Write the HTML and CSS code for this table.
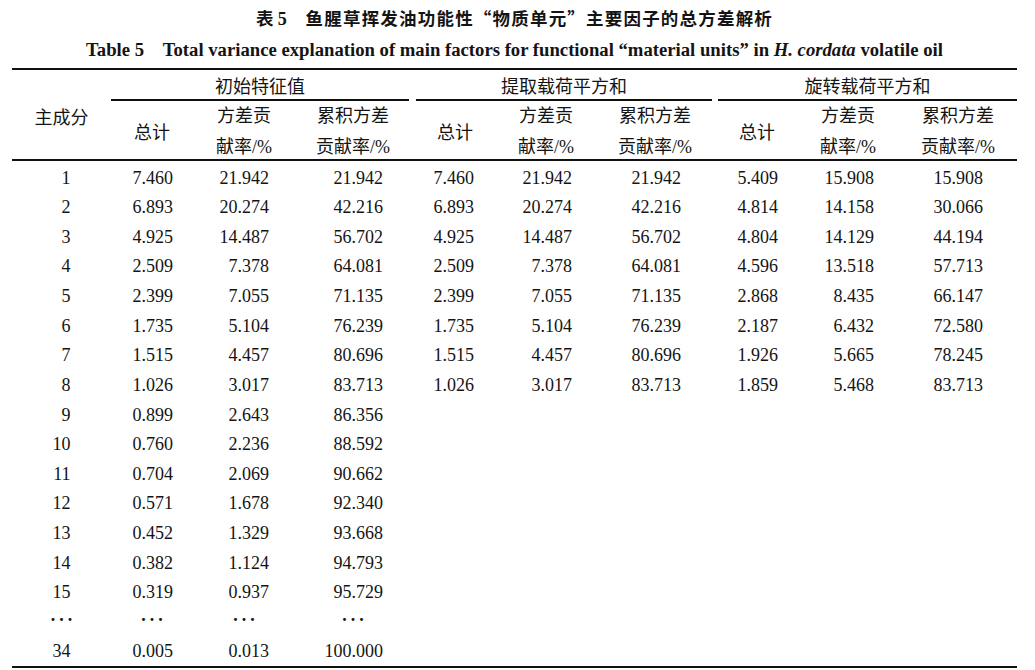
FILE: index.html
```html
<!DOCTYPE html>
<html lang="zh-CN">
<head>
<meta charset="utf-8">
<title>表 5 鱼腥草挥发油功能性“物质单元”主要因子的总方差解析</title>
<link rel="stylesheet" href="styles.css">
</head>
<body>
<div class="page">
  <div class="caption-cn"><span class="cn-bold">表</span> <span class="num-bold">5</span><span class="cn-bold cn-title">　鱼腥草挥发油功能性“物质单元”主要因子的总方差解析</span></div>
  <div class="caption-en">Table 5&nbsp;&nbsp;&nbsp;&nbsp;Total variance explanation of main factors for functional “material units” in <i>H. cordata</i> volatile oil</div>
  <table class="data">
    <colgroup>
      <col class="w0"><col class="w1"><col class="w2"><col class="w3"><col class="w4"><col class="w5"><col class="w6"><col class="w7"><col class="w8"><col class="w9">
    </colgroup>
    <thead>
      <tr>
        <th rowspan="2" class="rule-b comp">主成分</th>
        <th colspan="3" class="grp"><div class="grp-label g1">初始特征值</div></th>
        <th colspan="3" class="grp"><div class="grp-label g2">提取载荷平方和</div></th>
        <th colspan="3" class="grp"><div class="grp-label g3">旋转载荷平方和</div></th>
      </tr>
      <tr>
        <th class="rule-b"><div class="sub single">总计</div></th>
        <th class="rule-b"><div class="sub">方差贡<br>献率/%</div></th>
        <th class="rule-b"><div class="sub">累积方差<br>贡献率/%</div></th>
        <th class="rule-b"><div class="sub single">总计</div></th>
        <th class="rule-b"><div class="sub">方差贡<br>献率/%</div></th>
        <th class="rule-b"><div class="sub">累积方差<br>贡献率/%</div></th>
        <th class="rule-b"><div class="sub single">总计</div></th>
        <th class="rule-b"><div class="sub">方差贡<br>献率/%</div></th>
        <th class="rule-b"><div class="sub">累积方差<br>贡献率/%</div></th>
      </tr>
    </thead>
    <tbody>
      <tr class="first"><td class="c0">1</td><td class="c1">7.460</td><td class="c2">21.942</td><td class="c3">21.942</td><td class="c4">7.460</td><td class="c5">21.942</td><td class="c6">21.942</td><td class="c7">5.409</td><td class="c8">15.908</td><td class="c9">15.908</td></tr>
      <tr><td class="c0">2</td><td class="c1">6.893</td><td class="c2">20.274</td><td class="c3">42.216</td><td class="c4">6.893</td><td class="c5">20.274</td><td class="c6">42.216</td><td class="c7">4.814</td><td class="c8">14.158</td><td class="c9">30.066</td></tr>
      <tr><td class="c0">3</td><td class="c1">4.925</td><td class="c2">14.487</td><td class="c3">56.702</td><td class="c4">4.925</td><td class="c5">14.487</td><td class="c6">56.702</td><td class="c7">4.804</td><td class="c8">14.129</td><td class="c9">44.194</td></tr>
      <tr><td class="c0">4</td><td class="c1">2.509</td><td class="c2">7.378</td><td class="c3">64.081</td><td class="c4">2.509</td><td class="c5">7.378</td><td class="c6">64.081</td><td class="c7">4.596</td><td class="c8">13.518</td><td class="c9">57.713</td></tr>
      <tr><td class="c0">5</td><td class="c1">2.399</td><td class="c2">7.055</td><td class="c3">71.135</td><td class="c4">2.399</td><td class="c5">7.055</td><td class="c6">71.135</td><td class="c7">2.868</td><td class="c8">8.435</td><td class="c9">66.147</td></tr>
      <tr><td class="c0">6</td><td class="c1">1.735</td><td class="c2">5.104</td><td class="c3">76.239</td><td class="c4">1.735</td><td class="c5">5.104</td><td class="c6">76.239</td><td class="c7">2.187</td><td class="c8">6.432</td><td class="c9">72.580</td></tr>
      <tr><td class="c0">7</td><td class="c1">1.515</td><td class="c2">4.457</td><td class="c3">80.696</td><td class="c4">1.515</td><td class="c5">4.457</td><td class="c6">80.696</td><td class="c7">1.926</td><td class="c8">5.665</td><td class="c9">78.245</td></tr>
      <tr><td class="c0">8</td><td class="c1">1.026</td><td class="c2">3.017</td><td class="c3">83.713</td><td class="c4">1.026</td><td class="c5">3.017</td><td class="c6">83.713</td><td class="c7">1.859</td><td class="c8">5.468</td><td class="c9">83.713</td></tr>
      <tr><td class="c0">9</td><td class="c1">0.899</td><td class="c2">2.643</td><td class="c3">86.356</td><td></td><td></td><td></td><td></td><td></td><td></td></tr>
      <tr><td class="c0">10</td><td class="c1">0.760</td><td class="c2">2.236</td><td class="c3">88.592</td><td></td><td></td><td></td><td></td><td></td><td></td></tr>
      <tr><td class="c0">11</td><td class="c1">0.704</td><td class="c2">2.069</td><td class="c3">90.662</td><td></td><td></td><td></td><td></td><td></td><td></td></tr>
      <tr><td class="c0">12</td><td class="c1">0.571</td><td class="c2">1.678</td><td class="c3">92.340</td><td></td><td></td><td></td><td></td><td></td><td></td></tr>
      <tr><td class="c0">13</td><td class="c1">0.452</td><td class="c2">1.329</td><td class="c3">93.668</td><td></td><td></td><td></td><td></td><td></td><td></td></tr>
      <tr><td class="c0">14</td><td class="c1">0.382</td><td class="c2">1.124</td><td class="c3">94.793</td><td></td><td></td><td></td><td></td><td></td><td></td></tr>
      <tr><td class="c0">15</td><td class="c1">0.319</td><td class="c2">0.937</td><td class="c3">95.729</td><td></td><td></td><td></td><td></td><td></td><td></td></tr>
      <tr><td class="dots"><span class="dot-run">···</span></td><td class="dots"><span class="dot-run">···</span></td><td class="dots"><span class="dot-run">···</span></td><td class="dots"><span class="dot-run">···</span></td><td></td><td></td><td></td><td></td><td></td><td></td></tr>
      <tr class="last"><td class="c0">34</td><td class="c1">0.005</td><td class="c2">0.013</td><td class="c3">100.000</td><td></td><td></td><td></td><td></td><td></td><td></td></tr>
    </tbody>
  </table>
</div>
</body>
</html>
```
FILE: styles.css
```css
html, body {
  margin: 0;
  padding: 0;
  background: #ffffff;
}

body {
  color: #141414;
  font-family: "Liberation Serif", "Noto Sans CJK SC", serif;
}

.page {
  margin-left: 12px;
  width: 1005px;
}

/* ---------- captions ---------- */
.caption-cn {
  padding-top: 2px;
  line-height: 32px;
  height: 32px;
  text-align: center;
  font-size: 17.5px;
  white-space: nowrap;
}

.cn-bold {
  font-family: "Noto Sans CJK SC", sans-serif;
  font-weight: 700;
}

.cn-title {
  letter-spacing: 1.2px;
}

.num-bold {
  font-family: "Liberation Serif", serif;
  font-weight: 700;
  font-size: 18px;
}

.caption-en {
  margin-top: 1px;
  line-height: 30px;
  height: 30px;
  text-align: center;
  font-family: "Liberation Serif", serif;
  font-weight: 700;
  font-size: 18.7px;
  white-space: nowrap;
}

/* ---------- table ---------- */
.data {
  margin-top: 3px;
  width: 1005px;
  table-layout: fixed;
  border-collapse: separate;
  border-spacing: 0;
  border-top: 2px solid #111;
  border-bottom: 2px solid #111;
  font-size: 18px;
}

.w0 { width: 99px; }
.w1 { width: 82px; }
.w2 { width: 102px; }
.w3 { width: 116px; }
.w4 { width: 88px; }
.w5 { width: 94px; }
.w6 { width: 124px; }
.w7 { width: 80px; }
.w8 { width: 102px; }
.w9 { width: 118px; }

th {
  padding: 0;
  font-weight: 400;
  text-align: center;
  vertical-align: top;
  white-space: nowrap;
}

.rule-b {
  border-bottom: 2px solid #111;
}

.comp {
  padding-top: 33px;
  line-height: 31px;
}

.grp-label {
  padding-top: 6px;
  line-height: 23px;
  border-bottom: 2px solid #111;
}

.g1 { margin-right: 2px; }
.g2 { margin: 0 5px; }
.g3 { margin-left: 1px; }

.sub {
  height: 58px;
  line-height: 31px;
}

.sub.single {
  padding-top: 17px;
  height: 41px;
}

td {
  box-sizing: border-box;
  height: 29.64px;
  padding: 0;
  line-height: 20px;
  text-align: right;
  vertical-align: middle;
  white-space: nowrap;
}

tr.first td {
  height: 31.34px;
  padding-top: 1.7px;
}

tr.last td {
  height: 29.4px;
}

.c0 { padding-right: 40.5px; }
.c1 { padding-right: 20px; }
.c2 { padding-right: 26px; }
.c3 { padding-right: 28px; }
.c4 { padding-right: 25px; }
.c5 { padding-right: 21px; }
.c6 { padding-right: 36px; }
.c7 { padding-right: 19px; }
.c8 { padding-right: 25px; }
.c9 { padding-right: 34px; }

td.dots {
  text-align: center;
  font-size: 18px;
}

.dot-run {
  font-weight: 700;
  letter-spacing: 2.5px;
  margin-left: 2.5px;
  vertical-align: 3px;
}
```
